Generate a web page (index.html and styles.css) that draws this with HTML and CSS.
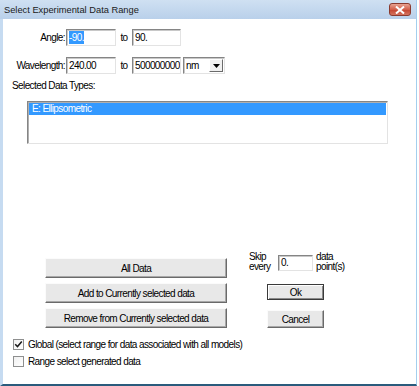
FILE: index.html
```html
<!DOCTYPE html>
<html>
<head>
<meta charset="utf-8">
<link rel="stylesheet" href="styles.css">
</head>
<body>
<div class="window">
  <div class="titlebar">
    <span class="title">Select Experimental Data Range</span>
    <span class="close"><svg width="10" height="8" viewBox="0 0 10 8"><path d="M1 0.5 L9 7.5 M9 0.5 L1 7.5" stroke="#fff" stroke-width="2"/></svg></span>
  </div>
  <div class="client">
    <div class="row row-angle">
      <span class="lbl">Angle:</span>
      <span class="field"><span class="sel">-90.</span></span>
      <span class="to">to</span>
      <span class="field f2">90.</span>
    </div>
    <div class="row row-wave">
      <span class="lbl">Wavelength:</span>
      <span class="field">240.00</span>
      <span class="to">to</span>
      <span class="field f2">500000000</span>
      <span class="combo"><span class="combo-text">nm</span><span class="drop"><svg width="7" height="4" viewBox="0 0 7 4"><path d="M0 0 H7 L3.5 4 Z" fill="#000"/></svg></span></span>
    </div>
    <div class="section">Selected Data Types:</div>
    <div class="listbox">
      <div class="item selected">E: Ellipsometric</div>
    </div>
    <div class="lower">
      <div class="btn-col">
        <div class="btn">All Data</div>
        <div class="btn">Add to Currently selected data</div>
        <div class="btn">Remove from Currently selected data</div>
      </div>
      <div class="right-col">
        <div class="skip">
          <span class="skip-lbl">Skip<br>every</span>
          <span class="field f3">0.</span>
          <span class="skip-lbl2">data<br>point(s)</span>
        </div>
        <div class="btn small default">Ok</div>
        <div class="btn small cancel">Cancel</div>
      </div>
    </div>
    <div class="checks">
      <div class="check-row"><span class="box"><svg width="9" height="9" viewBox="0 0 9 9"><path d="M1.2 4.2 L3.5 6.6 L7.8 1.6" stroke="#1a1a1a" stroke-width="1.5" fill="none"/></svg></span><span>Global (select range for data associated with all models)</span></div>
      <div class="check-row"><span class="box"></span><span>Range select generated data</span></div>
    </div>
  </div>
</div>
</body>
</html>
```

FILE: styles.css
```css
html, body {
  margin: 0;
  padding: 0;
  background: #fff;
}
body {
  font-family: "Liberation Sans", Arial, sans-serif;
  font-size: 10px;
  letter-spacing: -0.6px;
  color: #000;
}
.window {
  width: 419px;
  height: 386px;
  display: flex;
  flex-direction: column;
  box-sizing: border-box;
  background: #fff;
}
.titlebar {
  height: 19px;
  flex: none;
  display: flex;
  align-items: center;
  justify-content: space-between;
  padding: 0 5px 0 4px;
  background: linear-gradient(#cfe0f2, #b9d0ea);
  border-right: 1px solid #a4cfee;
  margin-right: 2px;
}
.title {
  font-size: 9.3px;
  letter-spacing: 0;
  color: #1a1a1a;
}
.close {
  width: 22px;
  height: 13px;
  box-sizing: border-box;
  border: 1px solid #8a3a2e;
  border-radius: 3px;
  background: linear-gradient(#e7a392, #d2604b 50%, #c4432f 51%, #d3735f);
  display: flex;
  align-items: center;
  justify-content: center;
}
.client {
  flex: 1;
  display: flex;
  flex-direction: column;
  border-left: 3px solid #c6dbf1;
  border-right: 1px solid #a4cfee;
  border-bottom: 2px solid #2a5b7c;
  margin-right: 2px;
  background: #fff;
  white-space: nowrap;
}
.row {
  display: flex;
  align-items: center;
  height: 17px;
}
.row-angle { margin-top: 10px; }
.row-wave { margin-top: 11px; }
.lbl {
  width: 63px;
  text-align: right;
  padding-right: 1px;
  box-sizing: border-box;
}
.field {
  width: 50px;
  height: 17px;
  box-sizing: border-box;
  border: 1px solid;
  border-color: #858585 #e3e3e3 #e3e3e3 #858585;
  box-shadow: inset 1px 1px 0 #c8c8c8;
  padding-left: 2px;
  line-height: 15px;
  background: #fff;
  overflow: hidden;
}
.f2 { width: 49px; }
.sel {
  background: #3399ff;
  color: #fff;
  padding: 1px 0;
}
.to {
  width: 16px;
  text-align: center;
}
.combo {
  margin-left: 2px;
  width: 42px;
  height: 17px;
  box-sizing: border-box;
  border: 1px solid;
  border-color: #858585 #e3e3e3 #e3e3e3 #858585;
  box-shadow: inset 1px 1px 0 #c8c8c8;
  display: flex;
  align-items: center;
  justify-content: space-between;
  padding: 1px 1px 1px 2px;
}
.drop {
  width: 14px;
  height: 13px;
  box-sizing: border-box;
  background: #f0f0f0;
  border: 1px solid;
  border-color: #fff #6b6b6b #6b6b6b #fff;
  display: flex;
  align-items: center;
  justify-content: center;
}
.section {
  margin-top: 5px;
  padding-left: 9px;
  line-height: 13px;
}
.listbox {
  margin-top: 9px;
  margin-left: 24px;
  width: 361px;
  height: 43px;
  box-sizing: border-box;
  border: 1px solid;
  border-color: #858585 #e3e3e3 #e3e3e3 #858585;
  box-shadow: inset 1px 1px 0 #b0b0b0;
  padding: 1px 1px 0 1px;
}
.item {
  height: 12px;
  line-height: 12px;
  padding-left: 3px;
}
.selected {
  background: #3399ff;
  color: #fff;
}
.lower {
  margin-top: 109px;
  display: flex;
}
.btn-col {
  margin-left: 42px;
  margin-top: 5px;
  width: 182px;
  display: flex;
  flex-direction: column;
  gap: 5px;
}
.btn {
  height: 20px;
  box-sizing: border-box;
  background: #e8e8e8;
  border: 1px solid;
  border-color: #fbfbfb #6a6a6a #6a6a6a #fbfbfb;
  box-shadow: inset -1px -1px 0 #a8a8a8;
  display: flex;
  align-items: center;
  justify-content: center;
}
.right-col {
  margin-left: 22px;
  display: flex;
  flex-direction: column;
}
.skip {
  display: flex;
  align-items: flex-start;
}
.skip-lbl {
  width: 29px;
  line-height: 10px;
  margin-top: -1px;
}
.f3 {
  width: 35px;
  height: 16px;
  margin-top: 2px;
  line-height: 14px;
}
.skip-lbl2 {
  margin-left: 3px;
  line-height: 10px;
  margin-top: -1px;
}
.small {
  margin-left: 18px;
  width: 57px;
}
.default {
  margin-top: 12px;
  height: 16px;
  border-color: #3a3a3a;
  box-shadow: inset 1px 1px 0 #fff, inset -1px -1px 0 #8a8a8a;
}
.cancel {
  margin-top: 10px;
  height: 18px;
}
.checks {
  margin-top: 10px;
  padding-left: 10px;
  display: flex;
  flex-direction: column;
  gap: 4px;
}
.check-row {
  display: flex;
  align-items: center;
  height: 13px;
  gap: 4px;
}
.box {
  width: 11px;
  height: 11px;
  box-sizing: border-box;
  border: 1px solid #8e8f8f;
  background: linear-gradient(135deg, #f0f0f0, #fff);
  display: flex;
  align-items: center;
  justify-content: center;
}
```
